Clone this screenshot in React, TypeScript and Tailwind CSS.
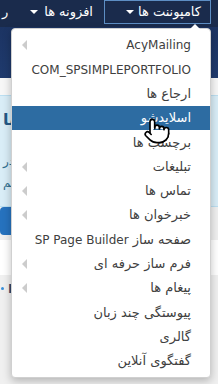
import { Pointer } from "lucide-react";

const items: { label: string; sub?: boolean; active?: boolean }[] = [
  { label: "AcyMailing", sub: true },
  { label: "COM_SPSIMPLEPORTFOLIO" },
  { label: "ارجاع ها" },
  { label: "اسلایدشو", active: true },
  { label: "برچسب ها" },
  { label: "تبلیغات", sub: true },
  { label: "تماس ها", sub: true },
  { label: "خبرخوان ها", sub: true },
  { label: "صفحه ساز SP Page Builder" },
  { label: "فرم ساز حرفه ای", sub: true },
  { label: "پیغام ها", sub: true },
  { label: "پیوستگی چند زبان" },
  { label: "گالری" },
  { label: "گفتگوی آنلاین" },
];

// Latin runs are set a touch smaller than the Persian text
function Label({ text }: { text: string }) {
  const parts = text.split(/([A-Za-z_][A-Za-z_ ]*[A-Za-z_])/);
  return (
    <span className="whitespace-nowrap">
      {parts.map((p, i) =>
        /[A-Za-z]/.test(p) ? (
          <span key={i} className="text-[12px]">
            {p}
          </span>
        ) : (
          <span key={i}>{p}</span>
        )
      )}
    </span>
  );
}

function Caret() {
  return <span className="inline-block h-0 w-0 border-x-[4px] border-t-[4px] border-x-transparent border-t-white" />;
}

export default function App() {
  return (
    <div
      dir="rtl"
      className="relative h-[384px] w-[218px] overflow-hidden bg-[#f0f0f0] text-[13px]"
      style={{ fontFamily: '"DejaVu Sans", sans-serif' }}
    >
      {/* top navbar */}
      <nav className="flex h-[27px] items-start bg-[#1a2b4c] text-white">
        <div className="mr-[7px] flex h-[24px] w-[107px] items-center gap-[4px] border border-[#5d8ec4] pr-[9px]">
          <span>کامپوننت ها</span>
          <Caret />
        </div>
        <div className="mr-[11px] flex h-[24px] items-center gap-[6px]">
          <span>افزونه ها</span>
          <Caret />
        </div>
        <div className="mr-[22px] flex h-[24px] items-center">
          <span>ر</span>
        </div>
      </nav>

      {/* page header */}
      <div className="h-[51px] bg-gradient-to-b from-[#1c3463] to-[#1f3a6d]" />
      <div className="h-[17px] bg-[#f7f7f7]" />

      {/* info box */}
      <div className="mx-[-10px] h-[112px] border border-[#bcdff1] bg-[#d9edf7] px-3 pt-3 text-[#31708f]">
        <div className="text-left text-[16px] font-bold text-[#245a86]">با</div>
        <div className="mt-5 text-left text-[12px]">در</div>
        <div className="mt-1 text-left text-[12px]">کم</div>
      </div>
      <div className="flex justify-end">
        <div className="h-[28px] w-[40px] rounded-[4px] bg-[#2672be]" />
      </div>
      <div className="mt-[5px] h-[35px] bg-white" />
      <div className="flex items-center gap-1 pl-[1px] pt-1 text-[#33466a]" dir="ltr">
        <span className="h-[3px] w-[3px] rounded-full bg-[#3a8fd9]" />
        <span className="font-bold">P</span>
      </div>

      {/* dropdown */}
      <div className="absolute left-[11px] top-[28px] w-[200px] rounded-[4px] border border-[#d0d0d0] bg-white pb-[4px] pt-1 shadow-[0_3px_8px_rgba(0,0,0,0.25)]">
        <span className="absolute -top-[5px] right-[10px] h-0 w-0 border-x-[5px] border-b-[5px] border-x-transparent border-b-white" />
        {items.map((it) => (
          <div
            key={it.label}
            className={`flex h-[24.3px] items-center justify-between pl-[10px] pr-[19px] text-[13px] ${
              it.active ? "bg-[#2d6ca2] text-white" : "text-[#404040]"
            }`}
          >
            <Label text={it.label} />
            {it.sub && (
              <span className="h-0 w-0 border-y-[5px] border-r-[5px] border-y-transparent border-r-[#cccccc]" />
            )}
          </div>
        ))}
      </div>

      {/* cursor */}
      <Pointer
        className="absolute left-[143px] top-[117px] h-[28px] w-[28px]"
        fill="white"
        stroke="black"
        strokeWidth={1.4}
      />
    </div>
  );
}
